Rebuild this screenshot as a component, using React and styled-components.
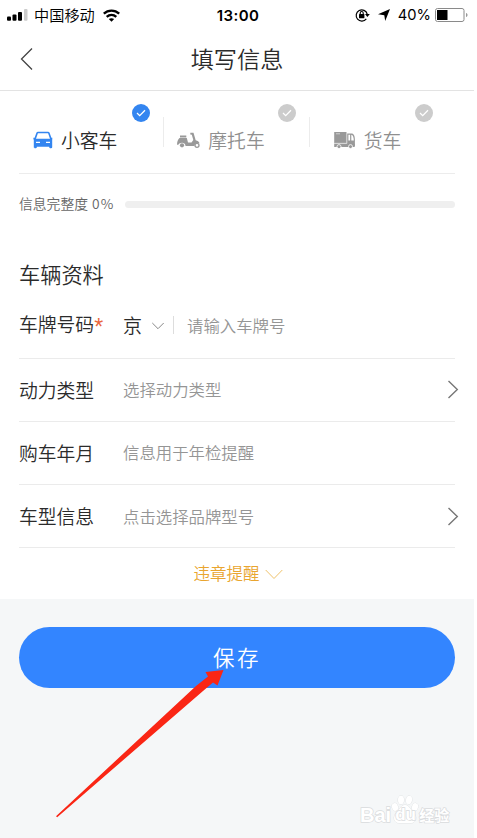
import React from 'react'
import styled, { createGlobalStyle } from 'styled-components'

const vehicles = [
  { id: 'car', name: '小客车', icon: CarIcon, active: true, start: 14, end: 14 },
  { id: 'moto', name: '摩托车', icon: ScooterIcon, start: 13, end: 14 },
  { id: 'truck', name: '货车', icon: TruckIcon, start: 24, end: 22 },
]

const fields = [
  { id: 'power', label: '动力类型', hint: '选择动力类型', arrow: true },
  { id: 'date', label: '购车年月', hint: '信息用于年检提醒' },
  { id: 'model', label: '车型信息', hint: '点击选择品牌型号', arrow: true },
]

const App = () => (
  <>
    <GlobalStyle />
    <Screen>
      <StatusBar />

      <Header>
        <BackIcon />
        <Title>填写信息</Title>
      </Header>

      <Content>
        <Tabs>
          {vehicles.map(({ id, name, icon: Icon, active, start, end }) => (
            <Tab key={id} $active={active} $start={start} $end={end}>
              <Badge $active={active}>
                <svg width='10' height='8' viewBox='0 0 10 8'>
                  <path d='M1 4l2.7 2.6L9 1.2' fill='none' stroke='#fff' strokeWidth='1.3' />
                </svg>
              </Badge>
              <TabLabel>
                <Icon />
                <TabName $active={active}>{name}</TabName>
              </TabLabel>
            </Tab>
          ))}
        </Tabs>

        <Progress>
          <ProgressText>信息完整度 <ProgressValue>0%</ProgressValue></ProgressText>
          <ProgressBar />
        </Progress>

        <SectionTitle>车辆资料</SectionTitle>

        <Row $first>
          <Label>车牌号码<Required>*</Required></Label>
          <Province>
            京
            <Chevron width='14' height='8' viewBox='0 0 14 8'>
              <path d='M1.3 1L7 6.7 12.7 1' fill='none' stroke='#888' />
            </Chevron>
          </Province>
          <Hint>请输入车牌号</Hint>
        </Row>

        {fields.map(({ id, label, hint, arrow }) => (
          <Row key={id}>
            <Label>{label}</Label>
            <Hint>{hint}</Hint>
            {arrow && <ArrowIcon />}
          </Row>
        ))}

        <Reminder>
          违章提醒
          <Chevron width='18' height='11' viewBox='0 0 18 11'>
            <path d='M.7 1L9 9.5 17.3 1' fill='none' stroke='#efc26a' />
          </Chevron>
        </Reminder>
      </Content>

      <Footer>
        <SaveButton>保存</SaveButton>
        <Pointer viewBox='0 0 170 152'>
          <path d='M0 147.2L140 17 152 7.5 149.5 3 167.500 1 161.5 16.500 157 13.500 147 22 1.2 148.2Z' fill='#fa2615' />
        </Pointer>
        <Watermark>
          <span>Bai</span>
          <Paw>
            <svg width='28' height='29' viewBox='0 0 28 29'>
              <g fill='#fff' stroke='#dcdee0' strokeWidth='.8'>
                <ellipse cx='4' cy='12' rx='3' ry='4' transform='rotate(-15 4 12)' />
                <ellipse cx='10' cy='5' rx='3' ry='4.2' />
                <ellipse cx='18' cy='5' rx='3' ry='4.2' transform='rotate(10 18 5)' />
                <ellipse cx='24' cy='12' rx='3' ry='4' transform='rotate(15 24 12)' />
                <path d='M14 10c-4 0-5 4-8 7-5 5-3 11 2 11h12c5 0 7-6 2-11-3-3-4-7-8-7z' />
              </g>
            </svg>
            <PawText>du</PawText>
          </Paw>
          <WatermarkName>经验</WatermarkName>
        </Watermark>
      </Footer>
    </Screen>
  </>
)

function StatusBar () {
  return (
    <Status>
      <StatusLeft>
        <svg width='21' height='12' viewBox='0 0 21 12'>
          <rect x='0' y='7.5' width='4' height='4.3' rx='1' />
          <rect x='5.5' y='5.5' width='4' height='6.3' rx='1' />
          <rect x='11' y='3' width='4' height='8.8' rx='1' />
          <rect x='17' y='0' width='3.5' height='11.8' rx='1' fill='#ccc' />
        </svg>
        <Carrier>中国移动</Carrier>
        <svg width='17' height='13' viewBox='0 0 17 13' fill='none' stroke='#000' strokeWidth='2.3'>
          <path d='M.8 4.7c4.4-4.2 11-4.2 15.4 0M3.7 7.9c2.8-2.6 6.8-2.6 9.6 0' />
          <path d='M8.5 12.8L5.8 10.1c1.6-1.3 3.8-1.3 5.4 0z' fill='#000' stroke='none' />
        </svg>
      </StatusLeft>
      <Time>13:00</Time>
      <StatusRight>
        <svg width='15' height='14' viewBox='0 0 15 14'>
          <path d='M11.3 10.8A5.6 5.6 0 1 1 12.2 6' fill='none' stroke='#000' strokeWidth='1.2' />
          <path d='M10 6.1h4.8l-2.4 3z' />
          <rect x='4' y='6.1' width='5.4' height='4.2' rx='.5' />
          <path d='M5.2 6.3V5a1.5 1.5 0 0 1 3 0v1.3' fill='none' stroke='#000' strokeWidth='1.1' />
        </svg>
        <svg width='12' height='12' viewBox='0 0 12 12'>
          <path d='M12 0L7.2 12 6.3 6.3 0 5.2z' />
        </svg>
        <Battery>
          <span>40%</span>
          <svg width='33' height='14' viewBox='0 0 33 14'>
            <rect x='.5' y='.5' width='28.5' height='13' rx='2' fill='none' stroke='#8a8a8a' />
            <rect x='2' y='2' width='10.5' height='10' />
            <path d='M31 5c2 .5 2 3.5 0 4z' fill='#999' />
          </svg>
        </Battery>
      </StatusRight>
    </Status>
  )
}

function BackIcon () {
  return (
    <svg width='14' height='24' viewBox='0 0 14 24'>
      <path d='M12 1.5L1.5 12 12 22.5' fill='none' stroke='#444' strokeWidth='1.3' />
    </svg>
  )
}

function ArrowIcon () {
  return (
    <Arrow width='12' height='19' viewBox='0 0 12 19'>
      <path d='M1.5 1l8.8 8.5-8.8 8.5' fill='none' stroke='#777' strokeWidth='1.4' />
    </Arrow>
  )
}

function CarIcon () {
  return (
    <svg width='20' height='18' viewBox='0 0 20 18' fill='currentColor'>
      <path fillRule='evenodd' d='M5 .8h10c.8 0 1.3.3 1.6 1l1.8 5h.9v1.5l-.1.5V16c0 .8-.3 1.2-1 1.2h-1c-.7 0-1-.4-1-1.2v-.3H3.8v.3c0 .8-.3 1.2-1 1.2h-1c-.7 0-1-.4-1-1.2V8.8L.4 8.3V6.8h1.2l1.8-5C3.7 1.100 4.2.8 5 .8zM4.900 2.200L3 7.800h14l-1.900-5.600zM3 10.800v1.300h4v-1.300zm10 0v1.300h4v-1.300z' />
    </svg>
  )
}

function ScooterIcon () {
  return (
    <svg width='23' height='16' viewBox='0 0 23 16' fill='currentColor'>
      <path d='M3 3.5h6.3v2H3zM2.5 6h7.3l1.2 4.5h3.5l1.8-2.5-1.5-5.200-1.5-.2V.8h3.2l2.2 7.4c2 .4 3.3 1.4 3.9 3h-2.3c-1.7.1-2.7 1.2-2.9 2.8H8.6c-.4-2.2-1.6-3.3-3.6-3.3-1.8 0-3 .8-3.7 2H0c.1-3.3.9-5.200 2.5-6.7z' />
      <circle cx='5' cy='13.3' r='2.1' />
      <circle cx='20' cy='13.3' r='2' fill='none' stroke='currentColor' strokeWidth='1.3' />
    </svg>
  )
}

function TruckIcon () {
  return (
    <svg width='22' height='18' viewBox='0 0 22 18'>
      <g fill='currentColor'>
        <path d='M.2 1h12.3v11H.2zM.2 12.5h20.5V16H.2z' />
        <path fillRule='evenodd' d='M13.2 2.5h4.3c2.3 0 3.4 2.6 3.4 6V15h-7.7zM14.4 3.7v5.8h1.7V3.7zm2.9 0v5.8h2.5c-.1-3.3-.8-5.8-2.5-5.8z' />
      </g>
      <path d='M2 2.8h4M.2 12.3h12.5' stroke='#ddd' strokeWidth='.8' />
      <circle cx='5' cy='15.6' r='2' fill='currentColor' stroke='#fff' strokeWidth='.8' />
      <circle cx='16.5' cy='15.6' r='2' fill='currentColor' stroke='#fff' strokeWidth='.8' />
    </svg>
  )
}

const GlobalStyle = createGlobalStyle`
  * {
    box-sizing: border-box;
  }

  body {
    background: #fff;
    font-family: 'Noto Sans CJK SC', sans-serif;
    font-weight: 350;
    margin: 0;
    overflow: hidden;
  }

  svg {
    display: block;
    flex-shrink: 0;
  }
`

const Screen = styled.div`
  background: #fff;
  color: #2b2b2b;
  display: flex;
  flex-direction: column;
  height: 838px;
  width: 474px;
`

const Status = styled.div`
  align-items: center;
  color: #000;
  display: grid;
  grid-template-columns: 1fr auto 1fr;
  height: 30px;
  padding: 0 6px 0 7px;
`

const StatusLeft = styled.div`
  align-items: center;
  display: flex;
  gap: 7px;
`

const Carrier = styled.span`
  font-size: 15.2px;
  line-height: 20px;
  margin: -2px 1px 0 -1px;
`

const Time = styled.span`
  font-family: Inter, sans-serif;
  font-size: 15px;
  font-weight: 600;
  letter-spacing: 0.4px;
  padding-left: 1px;
`

const StatusRight = styled.div`
  align-items: center;
  display: flex;
  gap: 8px;
  justify-content: flex-end;
`

const Battery = styled.div`
  align-items: center;
  display: flex;
  font-family: Inter, sans-serif;
  font-size: 14.7px;
  font-weight: 400;
  gap: 4px;
`

const Header = styled.header`
  align-items: center;
  border-bottom: 1px solid #e3e3e3;
  display: grid;
  grid-template-columns: 40px 1fr 40px;
  height: 61px;
  padding: 0 20px 3px;
`

const Title = styled.h1`
  font-size: 23.2px;
  font-weight: inherit;
  line-height: 34px;
  margin: -2px 0 0;
  text-align: center;
`

const Content = styled.main`
  height: 508px;
  padding: 0 19px;
`

const Tabs = styled.div`
  border-bottom: 1px solid #ececec;
  display: grid;
  grid-template-columns: repeat(3, 1fr);
  height: 83px;
`

const Tab = styled.div`
  background: linear-gradient(#ececec, #ececec) no-repeat right 26px / 1px 30px;
  color: ${({ $active }) => $active ? '#3385f0' : '#999'};
  display: flex;
  flex-direction: column;
  padding: 13px ${({ $end }) => $end}px 0 ${({ $start }) => $start}px;

  &:last-child {
    background: none;
  }
`

const Badge = styled.div`
  align-items: center;
  align-self: flex-end;
  background: ${({ $active }) => $active ? '#3385f0' : '#ccc'};
  border-radius: 50%;
  display: flex;
  height: 18px;
  justify-content: center;
  width: 18px;
`

const TabLabel = styled.div`
  align-items: center;
  display: flex;
  gap: 8px;
  line-height: 28px;
  margin-top: 4px;
`

const TabName = styled.span`
  color: ${({ $active }) => $active ? '#2b2b2b' : '#8f8f8f'};
  font-size: 18.8px;
`

const Progress = styled.div`
  align-items: center;
  display: flex;
  gap: 10px;
  height: 61px;
`

const ProgressText = styled.span`
  color: #666;
  font-size: 13.8px;
  margin-top: -3px;
  white-space: nowrap;
  width: 96px;
`

const ProgressValue = styled.span`
  letter-spacing: 1.2px;
  margin-left: 1px;
`

const ProgressBar = styled.div`
  background: #efefef;
  border-radius: 4px;
  flex: 1;
  height: 7px;
`

const SectionTitle = styled.h2`
  font-size: 21.2px;
  font-weight: inherit;
  line-height: 30px;
  margin: 24px 0 0;
`

const Row = styled.div`
  align-items: center;
  border-bottom: 1px solid #ebebeb;
  display: flex;
  height: ${({ $first }) => $first ? 69.6 : 63.2}px;
  padding: ${({ $first }) => $first ? '3px 0 0' : '0 0 1px'};
`

const Label = styled.span`
  font-size: 18.8px;
  white-space: nowrap;
  width: 104px;
`

const Required = styled.span`
  color: #e9683e;
  font-family: 'Liberation Sans', sans-serif;
  font-size: 23px;
  line-height: 1;
  vertical-align: -3px;
`

const Province = styled.div`
  align-items: center;
  background: linear-gradient(#ddd, #ddd) no-repeat right center / 1px 18px;
  display: flex;
  font-size: 19px;
  gap: 9px;
  margin-right: 13px;
  width: 51px;
`

const Chevron = styled.svg`
  margin-top: 2px;
`

const Hint = styled.span`
  color: #959595;
  flex: 1;
  font-size: 16.4px;
`

const Arrow = styled.svg`
  margin: 1px -4px 0 0;
`

const Reminder = styled.div`
  align-items: center;
  color: #e9a52f;
  display: flex;
  font-size: 16.5px;
  gap: 5px;
  height: 50px;
  justify-content: center;
  padding-left: 2px;
`

const Footer = styled.footer`
  background: #f5f7f8;
  flex: 1;
  padding: 28px 19px;
  position: relative;
`

const SaveButton = styled.button`
  background: #3385ff;
  border: 0;
  border-radius: 31px;
  color: #fff;
  font-family: inherit;
  font-size: 21.5px;
  font-weight: inherit;
  height: 61px;
  letter-spacing: 2.5px;
  padding: 0 0 2px;
  width: 100%;
`

const Pointer = styled.svg`
  height: 152px;
  left: 56px;
  position: absolute;
  top: 70px;
  width: 170px;
`

const Watermark = styled.div`
  align-items: flex-end;
  bottom: 14px;
  color: #fff;
  display: flex;
  font-family: 'Liberation Sans', sans-serif;
  font-size: 20px;
  font-weight: 700;
  left: 360px;
  line-height: 18px;
  paint-order: stroke fill;
  position: absolute;
  -webkit-text-stroke: 1.4px #d9dbdd;
`

const Paw = styled.div`
  position: relative;
`

const PawText = styled.span`
  font-size: 17px;
  left: 4px;
  position: absolute;
  top: 11px;
`

const WatermarkName = styled.span`
  font-family: 'Noto Sans CJK SC', sans-serif;
  font-size: 15px;
`

export default App
